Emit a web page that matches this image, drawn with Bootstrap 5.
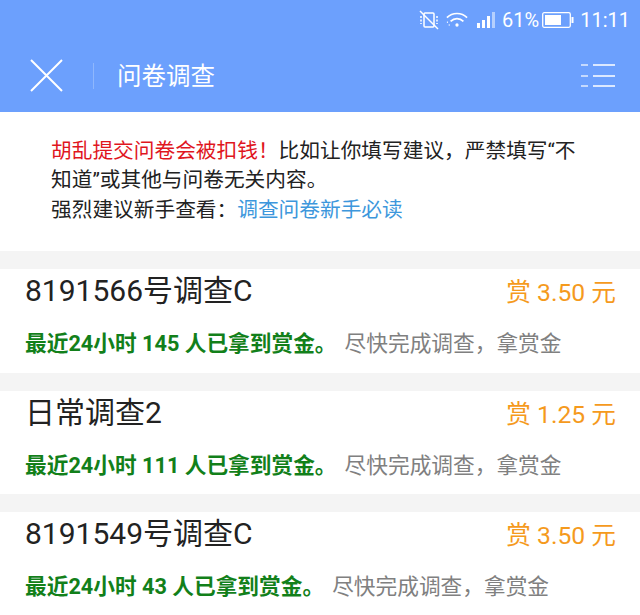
<!DOCTYPE html>
<html lang="zh">
<head>
  <meta charset="UTF-8">
  <title>问卷调查</title>
  <link href="https://cdn.jsdelivr.net/npm/bootstrap@5.3.5/dist/css/bootstrap.min.css" rel="stylesheet">
  <style>
    html, body { height: 615px; overflow: hidden; }
    body {
      background: #f4f4f4;
      font-family: Roboto, "Noto Sans CJK SC", sans-serif;
    }
    .top-area { background: #6ca0fd; height: 112px; color: #fff; }
    .status-bar { height: 39px; padding-right: 10px; gap: 6px; font-size: 20px; }
    .status-pct { margin-left: -1px; margin-right: -3px; }
    .icon-wifi { margin-right: 3px; }
    .title-bar { height: 73px; padding-left: 30px; padding-right: 25px; }
    .title-sep { width: 1px; height: 26px; background: #8fb7fd; margin-left: 30px; margin-right: 23px; }
    .title-text { font-size: 24.5px; padding-top: 3px; }
    .notice-box { background: #fff; height: 139px; padding: 24.5px 50px 0 51px; margin-bottom: 18px; font-size: 20.7px; line-height: 29.7px; color: #222; }
    .notice-red { color: #e0161e; }
    .notice-link { color: #3d97dc; text-decoration: none; }
    .survey-item { background: #fff; height: 103.5px; margin-bottom: 18px; padding: 0 24px 0 25px; }
    .survey-name { font-size: 30px; line-height: 42px; color: #222; padding-top: 1px; }
    .survey-reward { font-size: 24.7px; color: #f59a1d; line-height: 42px; padding-top: 3px; }
    .survey-meta { font-size: 21.7px; line-height: 30px; margin-top: 15px; }
    .meta-green { color: #12801a; font-weight: 700; }
    .meta-gray { color: #808080; margin-left: 8px; }
  </style>
</head>
<body>
  <div class="top-area">
    <div class="status-bar d-flex align-items-center justify-content-end">
      <svg width="21" height="20" viewBox="0 0 21 20" fill="none" stroke="#fff" stroke-width="1.5">
        <rect x="5" y="3" width="10" height="14" rx="1"/>
        <path d="M1 1l18 18"/>
        <path d="M2 6v8M18 6v8" stroke-dasharray="2 1.500"/>
      </svg>
      <svg class="icon-wifi" width="22" height="17" viewBox="0 0 24 18" fill="none" stroke="#fff" stroke-width="1.8">
        <path d="M1 7c6-6 16-6 22 0M5 11c4-4 10-4 14 0"/>
        <path d="M1 12h1M3 15h1" stroke-width="1.500"/>
        <circle cx="12" cy="15" r="1.800" fill="#fff" stroke="none"/>
      </svg>
      <svg width="20" height="16" viewBox="0 0 20 16" fill="#fff">
        <rect x="0" y="11" width="3" height="5"/>
        <rect x="5" y="8" width="3" height="8"/>
        <rect x="10" y="4" width="3" height="12"/>
        <rect x="15" y="0" width="3" height="16" opacity=".5"/>
      </svg>
      <span class="status-pct">61%</span>
      <svg width="32" height="16" viewBox="0 0 32 16" fill="none">
        <rect x=".7" y=".7" width="27.600" height="14.600" rx="1.500" stroke="#fff" stroke-width="1.300"/>
        <rect x="3" y="3" width="16" height="10" fill="#fff"/>
        <rect x="29.500" y="5" width="2" height="6" fill="#fff"/>
      </svg>
      <span>11:11</span>
    </div>
    <div class="title-bar d-flex align-items-center">
      <svg width="33" height="33" viewBox="0 0 33 33" stroke="#fff" stroke-width="2" fill="none">
        <path d="M1 1l31 31M32 1L1 32"/>
      </svg>
      <div class="title-sep"></div>
      <div class="title-text">问卷调查</div>
      <svg class="ms-auto" width="34" height="24" viewBox="0 0 34 24" stroke="#fff" stroke-width="1.600" fill="none">
        <path d="M12 1h22M12 12h22M12 22h22"/>
        <path d="M0 1h7M0 12h7M0 22h7" opacity=".8"/>
      </svg>
    </div>
  </div>

  <div class="notice-box">
    <div><span class="notice-red">胡乱提交问卷会被扣钱！</span><span>比如让你填写建议，严禁填写“不</span></div>
    <div>知道”或其他与问卷无关内容。</div>
    <div><span>强烈建议新手查看：</span><a class="notice-link" href="#">调查问卷新手必读</a></div>
  </div>

  <div class="survey-item">
    <div class="d-flex justify-content-between">
      <div class="survey-name">8191566号调查C</div>
      <div class="survey-reward">赏 3.50 元</div>
    </div>
    <div class="survey-meta"><span class="meta-green">最近24小时 145 人已拿到赏金。</span><span class="meta-gray">尽快完成调查，拿赏金</span></div>
  </div>

  <div class="survey-item">
    <div class="d-flex justify-content-between">
      <div class="survey-name">日常调查2</div>
      <div class="survey-reward">赏 1.25 元</div>
    </div>
    <div class="survey-meta"><span class="meta-green">最近24小时 111 人已拿到赏金。</span><span class="meta-gray">尽快完成调查，拿赏金</span></div>
  </div>

  <div class="survey-item">
    <div class="d-flex justify-content-between">
      <div class="survey-name">8191549号调查C</div>
      <div class="survey-reward">赏 3.50 元</div>
    </div>
    <div class="survey-meta"><span class="meta-green">最近24小时 43 人已拿到赏金。</span><span class="meta-gray">尽快完成调查，拿赏金</span></div>
  </div>

  <script src="https://cdn.jsdelivr.net/npm/bootstrap@5.3.5/dist/js/bootstrap.bundle.min.js"></script>
</body>
</html>
